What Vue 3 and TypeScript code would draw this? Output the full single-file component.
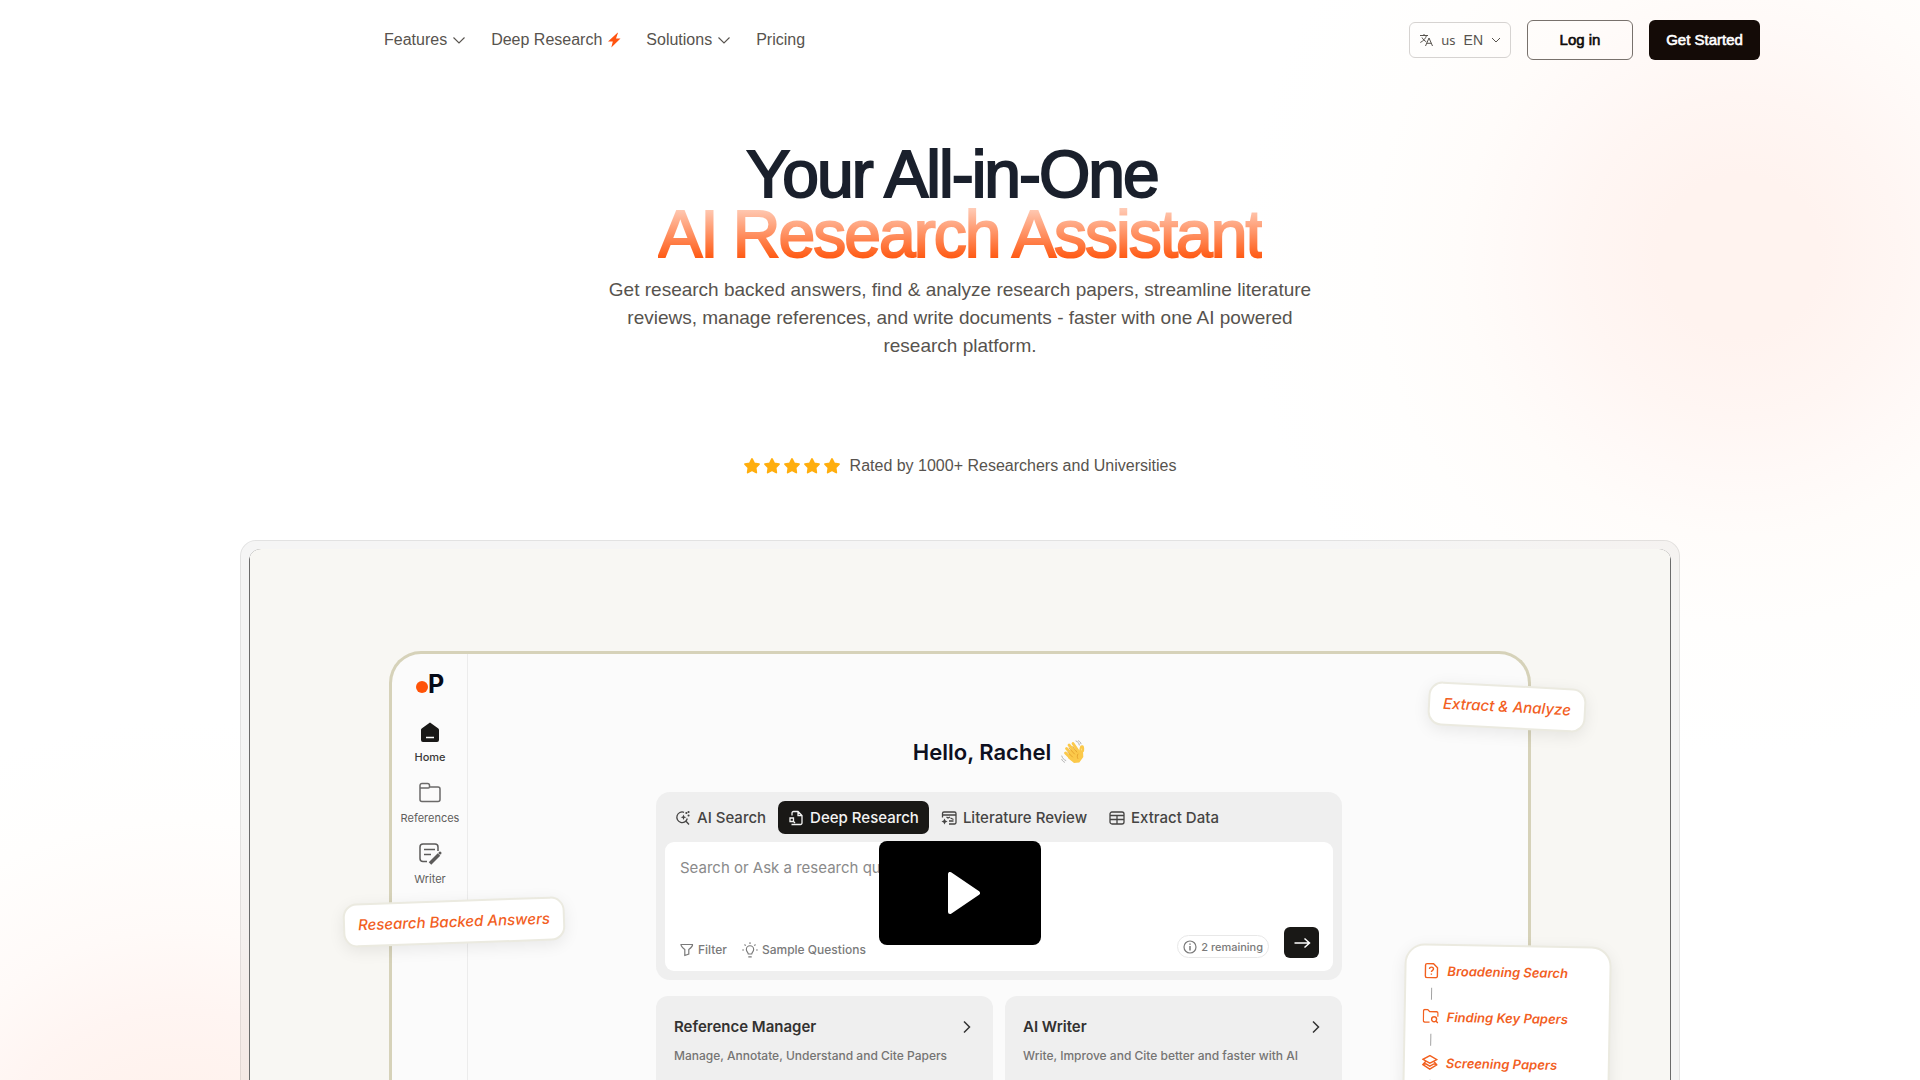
<script setup lang="ts">
interface NavItem {
  label: string
  icon: 'chevron' | 'bolt' | null
}

interface Tab {
  label: string
  icon: string
  active?: boolean
}

const navItems: NavItem[] = [
  { label: 'Features', icon: 'chevron' },
  { label: 'Deep Research', icon: 'bolt' },
  { label: 'Solutions', icon: 'chevron' },
  { label: 'Pricing', icon: null },
]

const tabs: Tab[] = [
  { label: 'AI Search', icon: 'search' },
  { label: 'Deep Research', icon: 'deep', active: true },
  { label: 'Literature Review', icon: 'review' },
  { label: 'Extract Data', icon: 'table' },
]

const tools = [
  { title: 'Reference Manager', text: 'Manage, Annotate, Understand and Cite Papers' },
  { title: 'AI Writer', text: 'Write, Improve and Cite better and faster with AI' },
]

const steps = [
  { label: 'Broadening Search', icon: 'question' },
  { label: 'Finding Key Papers', icon: 'folder' },
  { label: 'Screening Papers', icon: 'layers' },
]
</script>

<template>
  <div class="page">
    <div class="glow glow-right"></div>
    <div class="glow glow-left"></div>

    <header class="header">
      <nav class="nav">
        <a v-for="item in navItems" :key="item.label" href="#" class="nav-link">
          {{ item.label }}
          <svg v-if="item.icon === 'chevron'" class="nav-icon" viewBox="0 0 16 16" fill="none">
            <path d="M2.5 5.5 8 11l5.500-5.500" stroke="currentColor" stroke-width="1.1" />
          </svg>
          <svg v-if="item.icon === 'bolt'" class="nav-icon" viewBox="0 0 16 16">
            <path d="M11.500.8 2 9.500h4.800L5.300 15.500l9.200-9H10l2-5.700z" fill="#ff5310" />
          </svg>
        </a>
      </nav>
      <div class="actions">
        <button type="button" class="lang">
          <svg width="14" height="14" viewBox="0 0 14 14" fill="none" stroke="#57534e">
            <path d="M1 2.500h8M5 1v1.500M7.500 2.500C6.800 5.500 4 8.200 1.300 9.500M3 4.500c1 2 2.800 3.500 4.300 4.300M6.500 13 10 5l3.500 8M7.700 10.300h4.600" />
          </svg>
          <span class="region">us</span>
          <span>EN</span>
          <svg class="lang-arrow" width="10" height="10" viewBox="0 0 10 10" fill="none" stroke="#57534e">
            <path d="M1 3l4 4 4-4" />
          </svg>
        </button>
        <button type="button" class="login">Log in</button>
        <button type="button" class="start">Get Started</button>
      </div>
    </header>

    <main class="hero">
      <h1 class="title">
        <span class="title-dark">Your All-in-One</span>
        <span class="title-accent">AI Research Assistant</span>
      </h1>
      <p class="lead">
        Get research backed answers, find &amp; analyze research papers, streamline literature
        reviews, manage references, and write documents - faster with one AI powered research
        platform.
      </p>
      <div class="rating">
        <div class="stars">
          <svg v-for="n in 5" :key="n" width="16" height="16" viewBox="0 0 16 16">
            <path
              d="M8 1l2.200 4.300 4.800.8-3.400 3.400.7 5L8 12.300l-4.300 2.200.7-5L1 6.100l4.800-.8z"
              fill="#ffae0d"
              stroke="#ffae0d"
              stroke-width="1.800"
              stroke-linejoin="round"
            />
          </svg>
        </div>
        <span>Rated by 1000+ Researchers and Universities</span>
      </div>

      <section class="frame">
        <div class="video">
          <div class="poster">
            <div class="app">
              <aside class="sidebar">
                <div class="logo"><i class="logo-dot"></i><b>P</b></div>
                <a href="#" class="side-item current">
                  <svg width="24" height="24" viewBox="0 0 24 24">
                    <path d="M12 2.500 4 8.300a2 2 0 0 0-1 1.800V20a2 2 0 0 0 2 2h14a2 2 0 0 0 2-2v-9.900a2 2 0 0 0-1-1.800z" fill="#191817" />
                    <path d="M8 17.500h8" stroke="#fff" stroke-width="1.500" />
                  </svg>
                  <span>Home</span>
                </a>
                <a href="#" class="side-item">
                  <svg width="24" height="24" viewBox="0 0 24 24" fill="none" stroke="#6b6a69" stroke-width="1.500">
                    <path d="M2 7V4.500a2 2 0 0 1 2-2h5.500a2 2 0 0 1 2 2V6H20a2 2 0 0 1 2 2v10.500a2 2 0 0 1-2 2H4a2 2 0 0 1-2-2zM2 7h8a1.500 1.500 0 0 0 1.500-1" />
                  </svg>
                  <span>References</span>
                </a>
                <a href="#" class="side-item">
                  <svg width="24" height="24" viewBox="0 0 24 24" fill="none" stroke="#5c5b5a" stroke-width="1.500">
                    <path d="M9 19.500H5a3 3 0 0 1-3-3V5a3 3 0 0 1 3-3h12a3 3 0 0 1 3 3v4M6 7.500h11M6 12.500h7" />
                    <path d="m12 21.500 9-9" stroke-width="3.500" />
                    <circle cx="22" cy="11" r="1.500" fill="#5c5b5a" stroke="none" />
                  </svg>
                  <span>Writer</span>
                </a>
              </aside>

              <div class="workspace">
                <h2 class="greeting">
                  Hello, Rachel
                  <svg class="wave" width="24" height="24" viewBox="0 0 24 24" fill="none" stroke-linecap="round">
                    <path d="M8 12 11 8l6 3 5-1 .3 7-4 5.500-5.300.5L7 18z" fill="#fbc94a" />
                    <path d="M8 5 15 13M5.500 8.500l7 7.500M12 3.500l5.500 8M4.500 13l6 6" stroke="#fbc94a" stroke-width="2.800" />
                    <path d="M19 13c.5-3 .3-4.500 1.300-6.500 1.700-.8 2 1 1.700 4.500" stroke="#fbc94a" stroke-width="2.200" />
                    <path d="M8 8l5.500 6M6.500 12l5 5M11.800 6.500l4 5.500M17 14c-1 1.500-1 3-.2 4.500" stroke="#dd9524" stroke-width=".7" />
                    <path d="M15 1c2 .7 3 2 3.300 4M.8 16c.5 2 1.700 3.500 4 4.500M17.500.8c1.500.7 2.200 1.700 2.500 3M.8 19.500c.6 1.300 1.300 2 2.700 2.700" stroke="#b0b0b0" />
                  </svg>
                </h2>

                <div class="panel">
                  <div class="tabs">
                    <button v-for="tab in tabs" :key="tab.label" type="button" class="tab" :class="{ active: tab.active }">
                      <svg width="16" height="16" viewBox="0 0 16 16" fill="none" stroke="currentColor" stroke-width="1.300">
                        <g v-if="tab.icon === 'search'">
                          <path d="M9 2.300A5.300 5.300 0 1 0 12.300 8.500M10.800 11 14 14.500" />
                          <path d="M8.500 4.500l.8 2 2 .8-2 .8-.8 2-.8-2-2-.8 2-.8z" fill="currentColor" stroke="none" />
                          <path d="M11.300 3h.1M13.500 5.500h.1M13.500 2h.1" stroke-width="2" stroke-linecap="round" />
                        </g>
                        <g v-else-if="tab.icon === 'deep'">
                          <path d="M4 5.500V3a1.500 1.500 0 0 1 1.500-1.500H10L14 5.500V13a1.500 1.500 0 0 1-1.500 1.500H3.500M10 1.500V5.500H14" />
                          <path d="M2 8h3.500v3.500H2zM5.500 11.500 7 13" />
                        </g>
                        <g v-else-if="tab.icon === 'review'">
                          <path d="M1.500 7.500V3.500A1.500 1.500 0 0 1 3 2h10.500A1.500 1.500 0 0 1 15 3.500v9a1.500 1.500 0 0 1-1.500 1.500H8M1.500 5H15M8 11h4.500M9.500 8l3 1.500M5.500 7l1.500 1 2-1" />
                          <path d="M3.500 8.500l1 2 2 1-2 1-1 2-1-2-2-1 2-1z" fill="currentColor" stroke="none" />
                        </g>
                        <path v-else d="M3 2h10a2 2 0 0 1 2 2v8a2 2 0 0 1-2 2H3a2 2 0 0 1-2-2V4a2 2 0 0 1 2-2zM1 5.500h14M1 9.500h14M8 5.500V14" />
                      </svg>
                      {{ tab.label }}
                    </button>
                  </div>
                  <div class="query">
                    <textarea class="query-input" aria-label="Research question" placeholder="Search or Ask a research question"></textarea>
                    <div class="query-bar">
                      <button type="button" class="hint">
                        <svg width="14" height="14" viewBox="0 0 14 14" fill="none" stroke="currentColor" stroke-width="1.200">
                          <path d="M1 1.500h11.500c.3 1.500-.8 2.800-3.700 5v4.500l-4 1.500V6.500C2 4.300 1 3 1 1.500z" />
                        </svg>
                        Filter
                      </button>
                      <button type="button" class="hint">
                        <svg width="16" height="16" viewBox="0 0 14 14" fill="none" stroke="currentColor">
                          <path d="M5.500 10.500C5.500 9 3.800 8.500 3.800 6.500a3.200 3.200 0 0 1 6.400 0c0 2-1.700 2.500-1.700 4zM5.500 13h3M7 .3v1.500M.2 7h1.500M12.300 7h1.500M2.200 2.200l1 1M11.800 2.200l-1 1" />
                        </svg>
                        Sample Questions
                      </button>
                      <span class="remaining">
                        <svg width="14" height="14" viewBox="0 0 14 14" fill="none" stroke="currentColor" stroke-width="1.200">
                          <circle cx="7" cy="7" r="6" />
                          <path d="M7 6v4.500M7 3.500v1.300" stroke-width="1.500" />
                        </svg>
                        2 remaining
                      </span>
                      <button type="button" class="send" aria-label="Send">
                        <svg width="18" height="18" viewBox="0 0 18 18" fill="none" stroke="#fff" stroke-width="1.500">
                          <path d="M1.500 9h15M11.500 4.500 16.500 9l-5 4.500" />
                        </svg>
                      </button>
                    </div>
                  </div>
                </div>

                <div class="tools">
                  <article v-for="tool in tools" :key="tool.title" class="tool">
                    <div class="tool-head">
                      <h3>{{ tool.title }}</h3>
                      <svg width="16" height="16" viewBox="0 0 16 16" fill="none" stroke="#333" stroke-width="1.500">
                        <path d="m5 2.500 5.500 5.500L5 13.500" />
                      </svg>
                    </div>
                    <p>{{ tool.text }}</p>
                  </article>
                </div>
              </div>
            </div>

            <div class="callout callout-extract">Extract &amp; Analyze</div>
            <div class="callout callout-answers">Research Backed Answers</div>
            <ul class="callout steps">
              <li v-for="step in steps" :key="step.label" class="step">
                <svg width="16" height="16" viewBox="0 0 16 16" fill="none" stroke="currentColor" stroke-width="1.400">
                  <path v-if="step.icon === 'question'" d="M2 2.500A1.500 1.500 0 0 1 3.500 1H10l4 4v8.500a1.500 1.500 0 0 1-1.500 1.500h-9A1.500 1.500 0 0 1 2 13.500zM6 6.300c0-2.600 4-2.300 4 0C10 7.800 8 7.500 8 9.300M8 10.800v1.300" />
                  <path v-else-if="step.icon === 'folder'" d="M7 13.500H2A1.500 1.500 0 0 1 .7 12V2.500A1.500 1.500 0 0 1 2 1h3l2 2h7a1.500 1.500 0 0 1 1.300 1.500V8M11.500 8a2.500 2.500 0 1 0 0 5 2.500 2.500 0 0 0 0-5M13.300 12.300l2 2" />
                  <path v-else d="M8 1 15 4.800 8 8.500 1 4.800zM4 6.700 1 10 8 14.500l7-4.500-3-3.300M1 10 4 9.200l4 2.300 4-2.300 3 .8" />
                </svg>
                {{ step.label }}
              </li>
            </ul>
            <button type="button" class="play" aria-label="Play video">
              <svg width="32" height="42" viewBox="0 0 32 42">
                <path d="M2 2v38l28-19z" fill="#fff" stroke="#fff" stroke-width="4" stroke-linejoin="round" />
              </svg>
            </button>
          </div>
        </div>
      </section>
    </main>
  </div>
</template>

<style>
body {
  margin: 0;
  background: #fff;
}
</style>

<style scoped>
* {
  box-sizing: border-box;
}

button {
  font: inherit;
  color: inherit;
  padding: 0;
  border: 0;
  background: none;
  cursor: pointer;
}

a {
  color: inherit;
  text-decoration: none;
}

svg {
  flex: none;
  display: block;
}

.page {
  position: relative;
  height: 100vh;
  overflow: hidden;
  font-family: 'Liberation Sans', Arial, sans-serif;
  font-size: 16px;
  line-height: 24px;
  color: #57534e;
}

.glow {
  position: absolute;
  border-radius: 50%;
}

.glow-right {
  top: -244px;
  right: -320px;
  width: 1000px;
  height: 1000px;
  background: radial-gradient(closest-side, #fff3ef 0%, #fff3ef 16%, #fff6f3 32%, #fff9f7 44%, #fffcfa 56%, #fffefd 74%, #fff 100%);
}

.glow-left {
  bottom: -640px;
  left: -320px;
  width: 1000px;
  height: 1000px;
  background: radial-gradient(closest-side, #ffefe9 0%, #fff2ed 25%, #fff5f2 42%, #fffaf8 58%, #fffefd 80%, #fff 100%);
}

.header {
  position: relative;
  display: flex;
  align-items: center;
  justify-content: space-between;
  height: 80px;
  padding: 0 160px 0 384px;
}

.nav {
  display: flex;
  gap: 24px;
}

.nav-link {
  display: flex;
  align-items: center;
  gap: 4px;
}

.nav-icon {
  width: 16px;
  height: 16px;
}

.actions {
  display: flex;
  align-items: center;
  gap: 16px;
}

.lang {
  display: flex;
  align-items: center;
  gap: 8px;
  height: 36px;
  padding: 0 9px;
  border: 1px solid #d6d3d1;
  border-radius: 6px;
  font-size: 14px;
}

.region {
  font-family: 'Noto Sans', sans-serif;
  font-size: 13px;
}

.login,
.start {
  height: 40px;
  border-radius: 6px;
  font-size: 15px;
  -webkit-text-stroke: 0.04em;
}

.login {
  width: 106px;
  border: 1px solid #78716c;
  color: #0c0a09;
}

.start {
  width: 111px;
  background: #140b07;
  color: #fff;
}

.hero {
  position: relative;
  display: flex;
  flex-direction: column;
  align-items: center;
  padding-top: 64px;
}

.title {
  display: flex;
  flex-direction: column;
  align-items: center;
  margin: 0;
  font-size: 66px;
  line-height: 60px;
  font-weight: 400;
  letter-spacing: -2px;
  white-space: nowrap;
  -webkit-text-stroke: 2px;
}

.title-dark {
  padding-right: 16px;
  color: #1a202c;
}

.title-accent {
  background: linear-gradient(#ffd5c4, #ff5a14 90%);
  background-clip: text;
  -webkit-background-clip: text;
  color: transparent;
}

.lead {
  max-width: 720px;
  margin: 12px 0 0;
  font-size: 19px;
  line-height: 28px;
  text-align: center;
}

.rating {
  display: flex;
  align-items: center;
  gap: 10px;
  margin-top: 94px;
}

.stars {
  display: flex;
  gap: 4px;
}

.frame {
  width: 75%;
  margin-top: 62px;
  padding: 8px;
  border: 1px solid rgba(0, 0, 0, 0.08);
  border-radius: 16px;
  background: rgba(0, 0, 0, 0.04);
}

.video {
  padding: 0 1px;
  border-radius: 12px;
  background: #6b6b6b;
  overflow: hidden;
}

.poster {
  position: relative;
  aspect-ratio: 16 / 9;
  padding: 102px 139px 0;
  background: #f8f7f3;
  font-family: Inter, sans-serif;
  overflow: hidden;
}

.app {
  display: flex;
  height: 100%;
  border: 3px solid #d6d2b9;
  border-bottom: 0;
  border-radius: 32px 32px 0 0;
  background: #fbfbfb;
  overflow: hidden;
}

.sidebar {
  display: flex;
  flex-direction: column;
  align-items: center;
  gap: 16px;
  width: 76px;
  padding: 18px 0 0 1px;
  border-right: 1px solid #ececec;
}

.logo {
  display: flex;
  align-items: flex-end;
  margin-bottom: 8px;
  height: 24px;
  font-size: 25px;
  line-height: 24px;
  color: #060b18;
}

.logo-dot {
  width: 12px;
  height: 12px;
  margin-bottom: 3px;
  border-radius: 50%;
  background: #ff5308;
}

.side-item {
  display: flex;
  flex-direction: column;
  align-items: center;
  gap: 5px;
  font-size: 11px;
  line-height: 16px;
  color: #5f5e5d;
}

.side-item.current {
  font-weight: 500;
  color: #3a3938;
}

.workspace {
  flex: 1;
  display: flex;
  flex-direction: column;
  align-items: center;
  padding: 82px 0 0 2px;
}

.greeting {
  display: flex;
  align-items: center;
  gap: 10px;
  margin: 0 0 24px;
  font-size: 22px;
  line-height: 32px;
  font-weight: 600;
  color: #0e1020;
}

.panel {
  display: flex;
  flex-direction: column;
  gap: 8px;
  width: 686px;
  padding: 9px;
  border-radius: 14px;
  background: #efefef;
}

.tabs {
  display: flex;
  gap: 2px;
}

.tab {
  display: flex;
  align-items: center;
  gap: 6px;
  height: 33px;
  padding: 0 10px;
  border-radius: 7px;
  font-size: 15px;
  font-weight: 500;
  color: #454443;
  white-space: nowrap;
}

.tab.active {
  background: #191816;
  color: #f3f3f3;
}

.query {
  display: flex;
  flex-direction: column;
  justify-content: space-between;
  height: 129px;
  padding: 14px 14px 13px 15px;
  border-radius: 9px;
  background: #fff;
}

.query-input {
  width: 100%;
  height: 50px;
  padding: 0;
  border: 0;
  outline: 0;
  resize: none;
  background: none;
  font: inherit;
  font-size: 15px;
}

.query-input::placeholder {
  color: #8a8a8a;
}

.query-bar {
  display: flex;
  align-items: center;
  font-size: 12px;
  line-height: 16px;
  font-weight: 500;
  color: #7a7a7a;
}

.hint {
  display: flex;
  align-items: center;
  gap: 4px;
  margin-right: 15px;
  padding-top: 14px;
}

.remaining {
  display: flex;
  align-items: center;
  gap: 4px;
  height: 23px;
  margin: 8px 15px 0 auto;
  padding: 0 5px;
  border: 1px solid #e8e8e8;
  border-radius: 12px;
  font-size: 11px;
}

.send {
  display: grid;
  place-items: center;
  width: 35px;
  height: 31px;
  border-radius: 6px;
  background: #191816;
}

.tools {
  display: grid;
  grid-template-columns: 1fr 1fr;
  gap: 12px;
  width: 686px;
  margin-top: 16px;
}

.tool {
  height: 100px;
  padding: 19px 18px;
  border-radius: 12px;
  background: #efefef;
}

.tool-head {
  display: flex;
  align-items: center;
  justify-content: space-between;
}

.tool h3 {
  margin: 0;
  font-size: 15px;
  line-height: 24px;
  font-weight: 600;
  color: #333231;
}

.tool p {
  margin: 7px 0 0;
  font-size: 12px;
  line-height: 20px;
  font-weight: 500;
  color: #757473;
  white-space: nowrap;
}

.callout {
  position: absolute;
  border: 2px solid #ebeae0;
  border-radius: 14px;
  background: #fff;
  box-shadow: 0 4px 16px rgba(0, 0, 0, 0.08);
  font-style: italic;
  font-weight: 500;
  font-size: 15px;
  line-height: 40px;
  text-align: center;
  color: #f2601f;
  white-space: nowrap;
}

.callout-extract {
  top: 136px;
  right: 84px;
  width: 158px;
  transform: rotate(3deg);
}

.callout-answers {
  top: 351px;
  left: 93px;
  width: 222px;
  transform: rotate(-2deg);
}

.steps {
  top: 396px;
  right: 60px;
  display: flex;
  flex-direction: column;
  gap: 22px;
  width: 207px;
  height: 220px;
  margin: 0;
  padding: 13px 17px;
  border-radius: 20px;
  font-size: 13px;
  line-height: 24px;
  font-weight: 600;
  list-style: none;
  transform: rotate(1deg);
}

.step {
  position: relative;
  display: flex;
  align-items: center;
  gap: 8px;
}

.step::after {
  content: '';
  position: absolute;
  left: 8px;
  top: 29px;
  height: 12px;
  border-left: 1px solid #a3a3a3;
}

.play {
  position: absolute;
  inset: 0;
  width: 162px;
  height: 104px;
  margin: 292px auto 0;
  display: grid;
  place-items: center;
  border-radius: 8px;
  background: #000;
}

.play svg {
  margin-left: 8px;
}
</style>
